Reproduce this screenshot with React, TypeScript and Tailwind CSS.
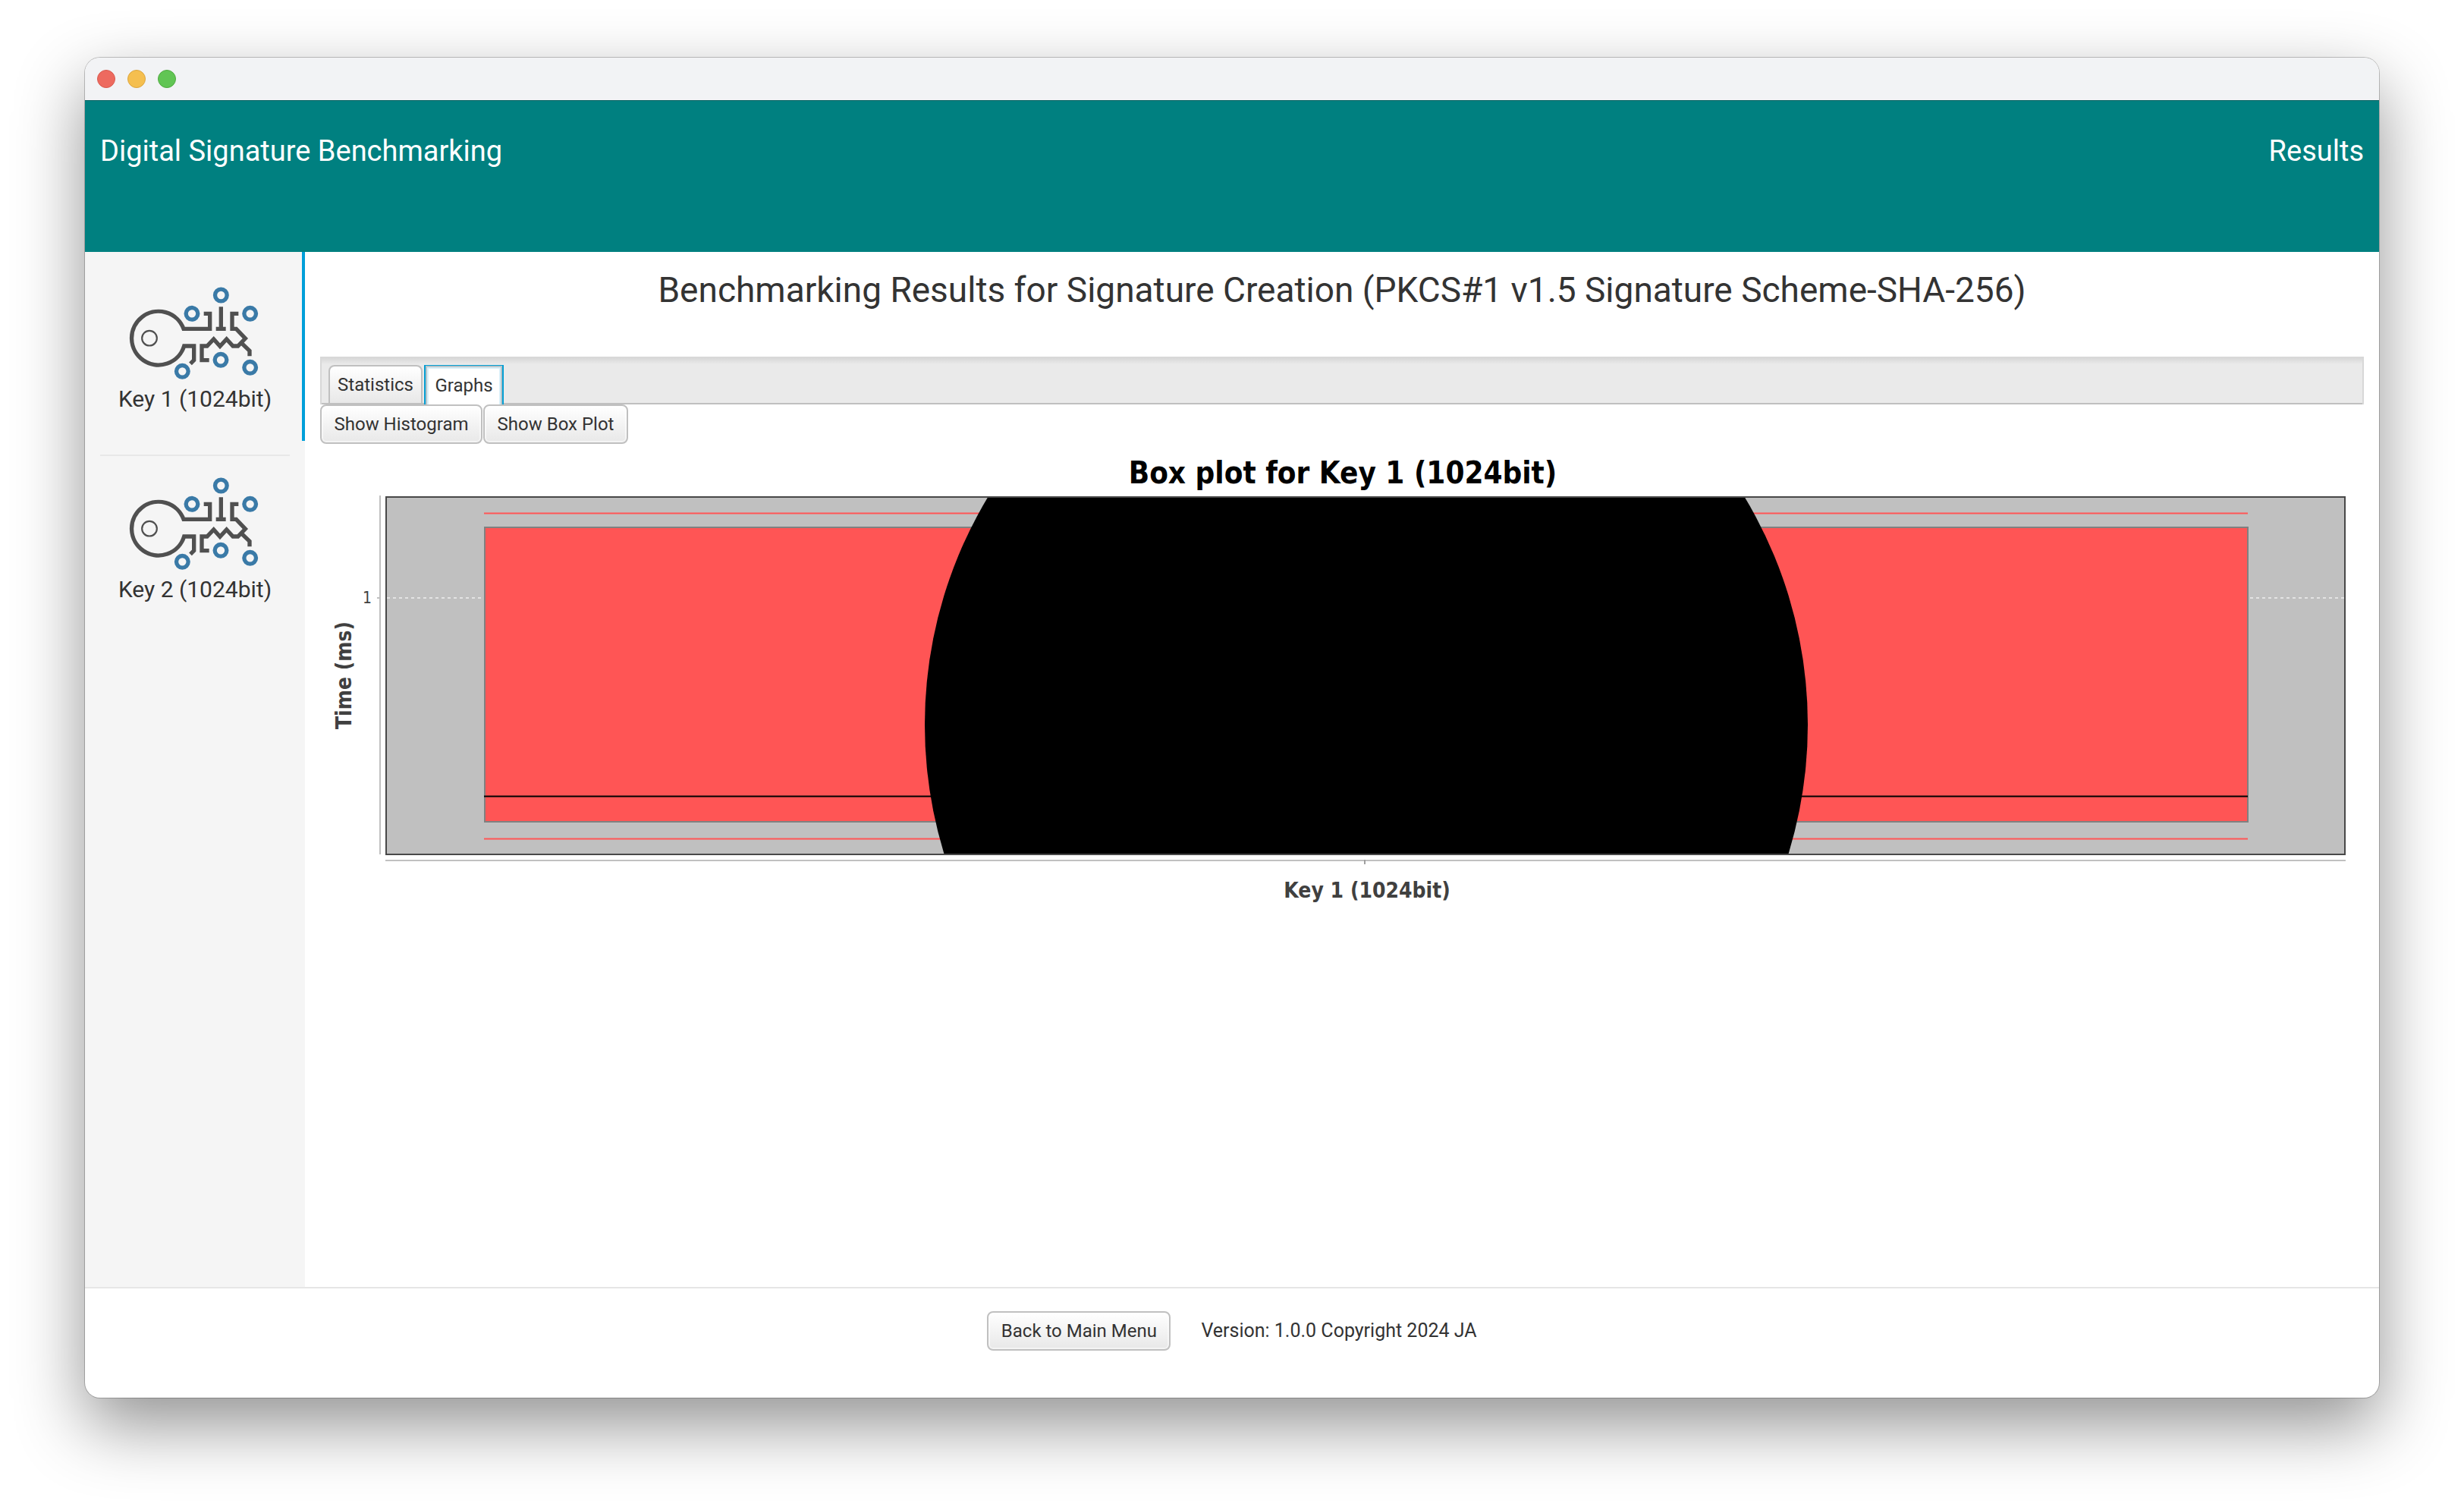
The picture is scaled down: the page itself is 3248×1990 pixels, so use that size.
import { useState } from "react";

const PLOT_LABEL = 'font-["DejaVu_Sans_Condensed","DejaVu_Sans",sans-serif] font-bold';

function KeyIcon() {
  const nodes = [
    [364, 57],
    [249, 130],
    [479, 130],
    [211, 358],
    [363, 313],
    [479, 343],
  ];
  return (
    <svg viewBox="-24 0 570 408" className="h-[136px] w-[190px]" fill="none" aria-hidden="true">
      <g stroke="#505050" strokeWidth="16" strokeLinejoin="miter">
        <path d="M296 130H320V190H216A106 106 0 1 0 218 258H257V314L243 328" />
        <path d="M364 103V190M344 190H383" />
        <path d="M433 130H408V190H424L460 228L431 258H411L386 231L360 259L335 231L309 258H288V314H317" />
        <path d="M446 247L477 277V298" />
        <circle cx="81" cy="227" r="29.5" strokeWidth="6.5" />
      </g>
      <g stroke="#3a7aa7" strokeWidth="16">
        {nodes.map(([cx, cy]) => (
          <circle key={`${cx}-${cy}`} cx={cx} cy={cy} r="23.5" />
        ))}
      </g>
    </svg>
  );
}

function PushButton({ children, className }: { children: string; className: string }) {
  return (
    <button
      className={`h-[52px] rounded-lg border-2 border-[#c0c0c0] bg-gradient-to-b from-white to-[#e8e8e8] text-center text-[24px] leading-8 whitespace-nowrap shadow-[inset_0_0_0_2px_rgba(255,255,255,0.5)] ${className}`}
    >
      {children}
    </button>
  );
}

function BoxPlot({ name }: { name: string }) {
  return (
    <svg viewBox="422 585 2694 635" className="block h-auto w-full" role="img" aria-label={`Box plot for ${name}`}>
      <defs>
        <clipPath id="plot-area">
          <rect x="508" y="654" width="2584" height="473" />
        </clipPath>
      </defs>
      <text x="1770" y="637" textAnchor="middle" fill="#000" className={`${PLOT_LABEL} text-[40px]`}>
        Box plot for {name}
      </text>
      <rect x="509" y="655" width="2582" height="472" fill="#c0c0c0" />
      <path d="M510 788H3091" stroke="#e3e3e3" strokeWidth="2" strokeDasharray="4 4" />
      <path d="M638 676.5H2963M638 1105.5H2963" stroke="#ff5555" strokeWidth="2" />
      <rect x="639" y="695" width="2324" height="388" fill="#ff5555" stroke="#808080" strokeWidth="2" />
      <path d="M638 1049.5H2963" stroke="#000" strokeWidth="2" />
      <circle cx="1801" cy="955" r="582" fill="#000" clipPath="url(#plot-area)" />
      <rect x="509" y="655" width="2582" height="471" fill="none" stroke="#484848" strokeWidth="2" />
      <path d="M501 653V1126M497 788H501M508 1134H3092" stroke="#c0c0c0" strokeWidth="2" />
      <path d="M1799 1133V1139" stroke="#a0a0a0" strokeWidth="2" />
      <text x="490" y="795" textAnchor="end" fill="#404040" className='font-["DejaVu_Sans_Condensed","DejaVu_Sans",sans-serif] text-[21px]'>
        1
      </text>
      <text transform="translate(463 890) rotate(-90)" textAnchor="middle" fill="#404040" className={`${PLOT_LABEL} text-[28px]`}>
        Time (ms)
      </text>
      <text x="1802" y="1183" textAnchor="middle" fill="#404040" className={`${PLOT_LABEL} text-[28px]`}>
        {name}
      </text>
    </svg>
  );
}

export default function App() {
  const [selected, setSelected] = useState(0);
  const names = ["Key 1 (1024bit)", "Key 2 (1024bit)"];
  return (
    <div className='flex min-h-screen flex-col bg-white px-28 pt-[76px] pb-[148px] font-["Roboto",sans-serif] text-[#333333]'>
      <div className="flex flex-1 flex-col overflow-hidden rounded-[20px] bg-white shadow-[0_0_0_1px_rgba(0,0,0,0.22),0_36px_90px_rgba(0,0,0,0.43)]">
        <div className="flex h-14 items-center gap-4 bg-[#f2f3f5] px-4">
          <button aria-label="Close" className="size-6 rounded-full border border-[#d85a4f] bg-[#ed6a5f]" />
          <button aria-label="Minimize" className="size-6 rounded-full border border-[#dba53f] bg-[#f5bf4f]" />
          <button aria-label="Zoom" className="size-6 rounded-full border border-[#50aa41] bg-[#61c554]" />
        </div>

        <header className="flex h-[200px] items-start justify-between border-t border-[#005f5f] bg-[#008080] px-5 pt-10 text-[38px] leading-[52px] text-white">
          <span>Digital Signature Benchmarking</span>
          <span>Results</span>
        </header>

        <div className="flex flex-1">
          <nav className="w-[290px] shrink-0 bg-[#f5f5f5]">
            <button
              onClick={() => setSelected(0)}
              className="flex h-[249px] w-full flex-col items-center border-r-4 border-[#009fd9] pt-[38px] pl-1 text-[30px] leading-10"
            >
              <KeyIcon />
              {names[0]}
            </button>
            <hr className="mx-5 mt-[18px] border-t-2 border-[#e8e8e8]" />
            <button
              onClick={() => setSelected(1)}
              className="flex w-full flex-col items-center pt-5 text-[30px] leading-10"
            >
              <KeyIcon />
              {names[1]}
            </button>
          </nav>

          <main className="min-w-0 flex-1 px-5 pt-5">
            <h1 className="mb-[58px] text-center text-[46px] leading-[60px]">
              Benchmarking Results for Signature Creation (PKCS#1 v1.5 Signature Scheme-SHA-256)
            </h1>
            <div
              role="tablist"
              className="flex h-[63px] items-end gap-0.5 border-x-2 border-t-2 border-[#d8d8d8] bg-[#eaeaea] bg-[linear-gradient(to_bottom,#d8d8d8,#eaeaea_8px)] pl-[9px] text-[24px] leading-8 shadow-[inset_0_-2px_0_#c0c0c0]"
            >
              <button
                role="tab"
                aria-selected="false"
                className="mb-0.5 h-[50px] w-[124px] rounded-t-lg border-2 border-b-0 border-[#c0c0c0] bg-gradient-to-b from-white to-[#e8e8e8]"
              >
                Statistics
              </button>
              <button
                role="tab"
                aria-selected="true"
                className="h-[52px] w-[105px] border-x-2 border-t border-[#039ed3] bg-white shadow-[inset_2px_0_0_#b8c4c9,inset_-2px_0_0_#b8c4c9,inset_0_2px_0_#b8c4c9,inset_4px_0_0_#d9eff8,inset_-4px_0_0_#d9eff8,inset_0_4px_0_#d9eff8]"
              >
                Graphs
              </button>
            </div>
            <div className="flex gap-px">
              <PushButton className="w-[214px]">Show Histogram</PushButton>
              <PushButton className="w-[191px]">Show Box Plot</PushButton>
            </div>
            <BoxPlot name={names[selected]} />
          </main>
        </div>

        <footer className="flex h-[146px] items-start justify-center gap-10 border-t-2 border-[#e6e6e6] pt-[30px] text-[25px] leading-[52px]">
          <PushButton className="w-[242px]">Back to Main Menu</PushButton>
          <span>Version: 1.0.0 Copyright 2024 JA</span>
        </footer>
      </div>
    </div>
  );
}
